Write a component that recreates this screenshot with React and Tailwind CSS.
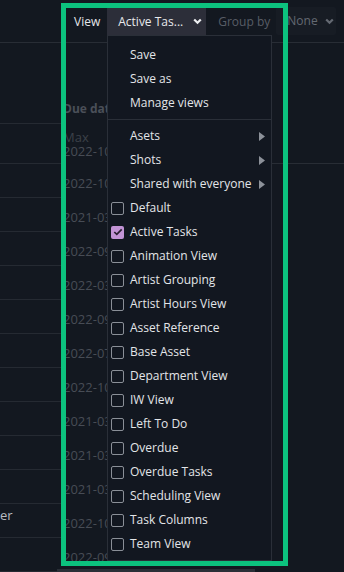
import React from 'react';

const dates = [
  '2022-10', '2021-03', '2022-09', '2022-03', '2022-09', '2022-07',
  '2022-10', '2021-03', '2021-03', '2021-03', '2022-10', '2022-09',
];

const folders = ['Asets', 'Shots', 'Shared with everyone'];

const views = [
  'Default', 'Active Tasks', 'Animation View', 'Artist Grouping', 'Artist Hours View',
  'Asset Reference', 'Base Asset', 'Department View', 'IW View', 'Left To Do',
  'Overdue', 'Overdue Tasks', 'Scheduling View', 'Task Columns', 'Team View',
];

const Chevron = ({ color }) => (
  <svg width="9" height="7" viewBox="0 0 9 7" className="shrink-0">
    <polyline points="1.2,1.5 4.5,4.8 7.8,1.5" fill="none" stroke={color} strokeWidth="2.2" />
  </svg>
);

const Checkbox = ({ checked }) =>
  checked ? (
    <div className="w-[13px] h-[13px] rounded-[2px] bg-[#c294d5] flex items-center justify-center shrink-0">
      <svg width="10" height="8" viewBox="0 0 10 8">
        <polyline points="1.3,4 3.8,6.4 8.7,1.4" fill="none" stroke="#2a1f31" strokeWidth="1.7" />
      </svg>
    </div>
  ) : (
    <div className="w-[13px] h-[13px] rounded-[2px] border-[1.5px] border-[#8a8f97] shrink-0" />
  );

const App = () => {
  return (
    <div className="relative w-[344px] h-[572px] overflow-hidden bg-[#131820] font-['Open_Sans',sans-serif] text-[12px]">
      {/* top bar */}
      <div className="flex items-start h-[43px] pt-[8px] pl-[74px] border-b border-[#282d35]">
        <div className="h-[27px] flex items-center text-[#e4e6e9]">View</div>
        <div className="ml-[7px] w-[99px] h-[27px] bg-[#2c2e39] flex items-center pl-[11px] gap-[10px] text-[#e8e9ec]">
          <span>Active Tas...</span>
          <Chevron color="#eceef0" />
        </div>
        <div className="ml-[12px] h-[27px] flex items-center text-[#585d66]">Group by</div>
        <div className="ml-[6px] w-[60px] h-[28px] -mt-[1px] bg-[#171c24] rounded-[2px] flex items-center pl-[11px] gap-[7px] text-[#646972]">
          <span>None</span>
          <Chevron color="#646972" />
        </div>
      </div>

      {/* table behind the menu */}
      <div className="flex">
        <div className="w-[61px] flex flex-col">
          <div className="h-[81px] border-b border-[#252a32]" />
          <div className="h-[40px] border-b border-[#252a32]" />
          {dates.map((d, i) => (
            <div key={i} className="h-[34px] border-b border-[#252a32] pt-[4px] leading-[14px] text-[13px] text-[#b7bbc1]">
              {i === 10 ? 'er' : ''}
            </div>
          ))}
        </div>
        <div className="w-[46px] overflow-hidden flex flex-col pl-[2px] text-[13px] text-[#474c55] leading-[14px] whitespace-nowrap">
          <div className="h-[81px] flex items-end pb-[8px] font-bold text-[12px] text-[#4a4f58]">Due date</div>
          <div className="h-[40px] pt-[6px]">
            <div className="text-[#3c4149]">Max</div>
            <div>2022-10</div>
          </div>
          {dates.map((d, i) => (
            <div key={i} className="h-[34px] flex items-center pt-[3px]">{d}</div>
          ))}
        </div>
        <div className="flex-1 flex flex-col">
          <div className="h-[121px] border-b border-[#282d35]" />
        </div>
      </div>

      {/* dropdown menu */}
      <div className="absolute left-[107px] top-[35px] w-[165px] h-[526px] bg-[#121720] border border-[#2a2f38] pt-[7px] pb-[4px] text-[#e3e5e8]">
        {['Save', 'Save as', 'Manage views'].map((t) => (
          <div key={t} className="h-[24px] flex items-center pl-[22px]">{t}</div>
        ))}
        <div className="my-[4px] h-px bg-[#2a2f38]" />
        {folders.map((t) => (
          <div key={t} className="h-[24px] flex items-center pl-[22px] pr-[6px]">
            <span className="flex-1 whitespace-nowrap">{t}</span>
            <svg width="6" height="9" viewBox="0 0 6 9" className="shrink-0">
              <polygon points="0,0 6,4.5 0,9" fill="#8c9199" />
            </svg>
          </div>
        ))}
        {views.map((t) => (
          <div key={t} className="h-[24px] flex items-center pl-[3px] gap-[6px]">
            <Checkbox checked={t === 'Active Tasks'} />
            <span className="whitespace-nowrap">{t}</span>
          </div>
        ))}
      </div>

      {/* scrollbar */}
      <div className="absolute left-[57px] bottom-0 w-[198px] h-[3px] bg-[#2a2f37]" />

      {/* highlight frame */}
      <div className="absolute left-[61px] top-[3px] w-[227px] h-[563px] border-[5px] border-[#0cc27e]" />
    </div>
  );
};

export default App;
